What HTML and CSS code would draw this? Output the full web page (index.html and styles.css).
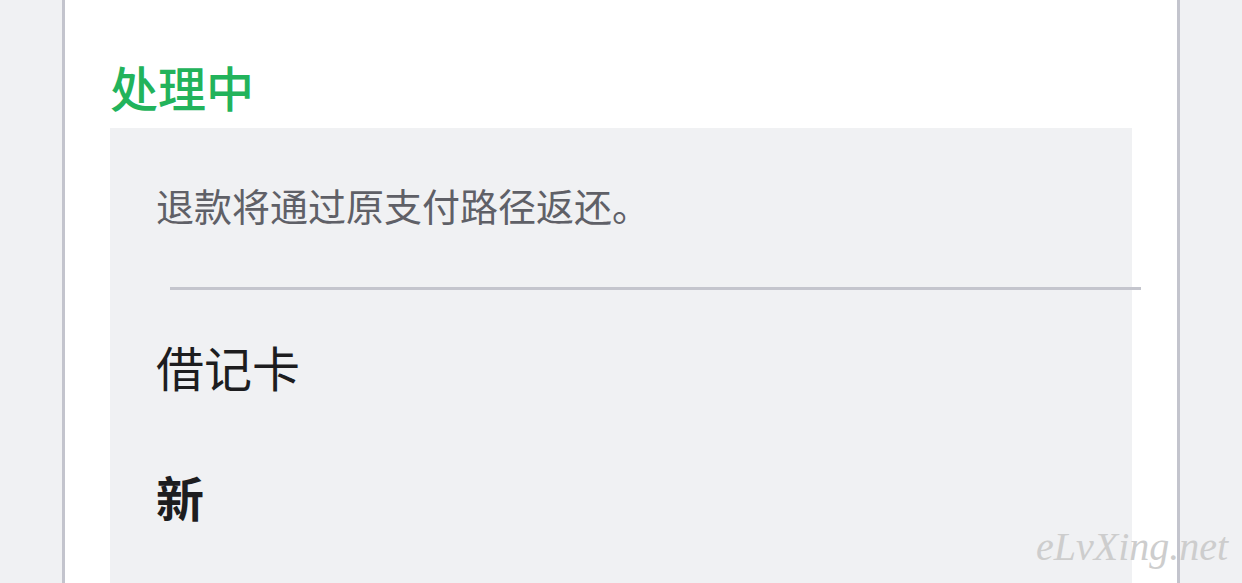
FILE: index.html
```html
<!DOCTYPE html>
<html lang="zh-CN">
<head>
<meta charset="utf-8">
<title>处理中</title>
<link rel="stylesheet" href="styles.css">
</head>
<body>
<div class="page">
  <div class="card">
    <h1 class="status">处理中</h1>
    <div class="panel">
      <p class="note">退款将通过原支付路径返还。</p>
      <div class="divider"></div>
      <p class="row">借记卡</p>
      <p class="row row-bold">新</p>
    </div>
  </div>
  <div class="watermark">eLvXing.net</div>
</div>
</body>
</html>
```
FILE: styles.css
```css
html, body {
  margin: 0;
  padding: 0;
  background: #f0f1f3;
  overflow: hidden;
}
body {
  font-family: "Noto Sans CJK SC", "Noto Sans", sans-serif;
}
.page {
  position: relative;
  width: 1242px;
  height: 583px;
  overflow: hidden;
}
.card {
  margin-left: 62px;
  height: 583px;
  background: #ffffff;
  border-left: 3px solid #c3c4cd;
  border-right: 3px solid #c3c4cd;
  padding: 56px 45px 0;
  box-sizing: content-box;
  width: 1022px;
}
.status {
  margin: 0 0 12px;
  font-size: 48px;
  line-height: 60px;
  font-weight: 500;
  color: #22b35b;
}
.panel {
  background: #f0f1f3;
  padding: 37px 0 0 46px;
  height: 600px;
}
.note {
  margin: 0;
  font-size: 38px;
  line-height: 80px;
  color: #5f6067;
}
.divider {
  margin: 42px -9px 0 14px;
  height: 3px;
  background: #c4c5cd;
}
.row {
  margin: 36px 0 0;
  font-size: 48px;
  line-height: 80px;
  color: #1d1d1f;
}
.row-bold {
  margin-top: 50px;
  font-weight: 700;
}
.watermark {
  position: absolute;
  left: 1036px;
  top: 522px;
  font-family: "Liberation Serif", serif;
  font-style: italic;
  font-size: 40px;
  line-height: 50px;
  color: #cdcdcd;
}
```
